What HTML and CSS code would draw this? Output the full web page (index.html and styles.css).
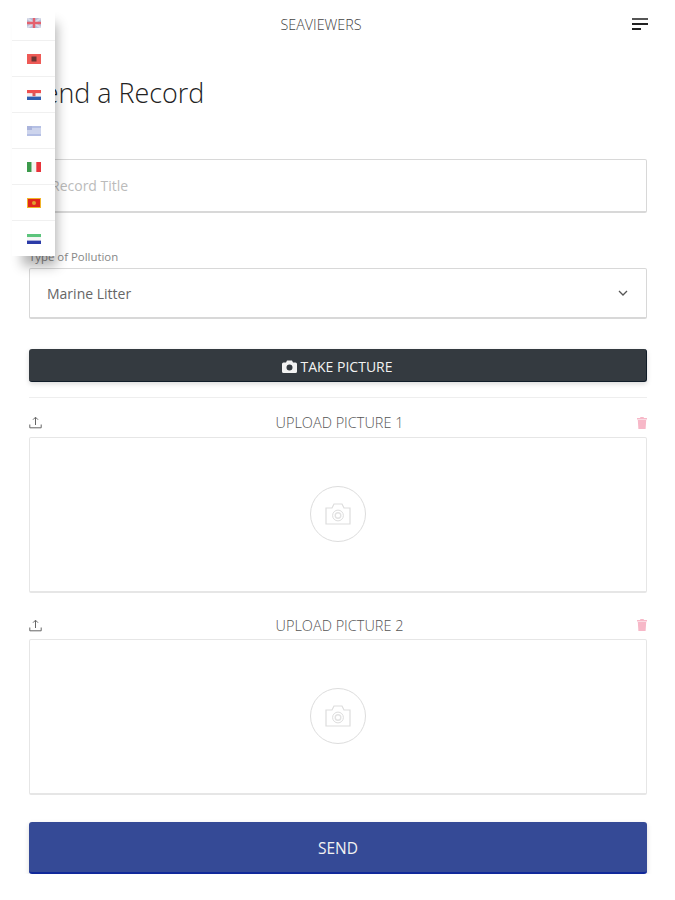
FILE: index.html
```html
<!DOCTYPE html>
<html lang="en">
<head>
  <meta charset="UTF-8" />
  <title>Seaviewers</title>
  <link rel="stylesheet" href="styles.css">
</head>
<body>
  <header class="topbar">
    <span class="brand">SEAVIEWERS</span>
    <svg class="burger" width="16" height="14" viewBox="0 0 16 14">
      <rect x="0" y="0" width="16" height="2" fill="#555"/>
      <rect x="0" y="5" width="16" height="2" fill="#222"/>
      <rect x="0" y="10" width="9" height="2" fill="#222"/>
    </svg>
  </header>

  <!-- language menu, lies over the form -->
  <ul class="langs">
    <li>
      <svg class="flag" viewBox="0 0 14 10">
        <rect width="14" height="10" fill="#b9bfd8"/>
        <path d="M0 0L14 10M14 0L0 10" stroke="#d9dbe8" stroke-width="2"/>
        <path d="M7 0V10M0 5H14" stroke="#e4606d" stroke-width="2.4"/>
      </svg>
    </li>
    <li>
      <svg class="flag" viewBox="0 0 14 10">
        <rect width="14" height="10" fill="#ee5a56"/>
        <rect x="4.5" y="2.5" width="5" height="5" fill="#6b3533"/>
      </svg>
    </li>
    <li>
      <svg class="flag" viewBox="0 0 14 10">
        <rect width="14" height="3.4" fill="#ee4f4f"/>
        <rect y="3.4" width="14" height="3.2" fill="#f4eeee"/>
        <rect y="6.6" width="14" height="3.4" fill="#2f5fb0"/>
        <rect x="5.5" y="2.6" width="3" height="3.6" fill="#d65a5a"/>
      </svg>
    </li>
    <li>
      <svg class="flag" viewBox="0 0 14 10">
        <rect width="14" height="10" fill="#b4bfe4"/>
        <path d="M0 3H14M0 5H14M0 7H14" stroke="#e6e9f5" stroke-width="1"/>
        <rect width="5" height="4" fill="#aab4dc"/>
      </svg>
    </li>
    <li>
      <svg class="flag" viewBox="0 0 14 10">
        <rect width="4.7" height="10" fill="#3c9a4c"/>
        <rect x="4.7" width="4.6" height="10" fill="#f4f4f0"/>
        <rect x="9.3" width="4.7" height="10" fill="#e8333a"/>
      </svg>
    </li>
    <li>
      <svg class="flag" viewBox="0 0 14 10">
        <rect width="14" height="10" fill="#f0b429"/>
        <rect x="1" y="1" width="12" height="8" fill="#e1261c"/>
        <circle cx="7" cy="5" r="2" fill="#e0a030"/>
      </svg>
    </li>
    <li>
      <svg class="flag" viewBox="0 0 14 10">
        <rect width="14" height="3.2" fill="#5cc47c"/>
        <rect y="3.2" width="14" height="3.4" fill="#f6f6f6"/>
        <rect y="6.6" width="14" height="3.4" fill="#2b3ba8"/>
      </svg>
    </li>
  </ul>

  <main class="page">
    <h1>Send a Record</h1>

    <input class="field field-title" type="text" placeholder="Record Title">

    <label class="field-label" for="pollution">Type of Pollution</label>
    <div class="select">
      <span id="pollution">Marine Litter</span>
      <svg width="10" height="6" viewBox="0 0 10 6">
        <path d="M1 1l4 4 4-4" fill="none" stroke="#555" stroke-width="1.3"/>
      </svg>
    </div>

    <button class="btn btn-dark">
      <svg width="15" height="13" viewBox="0 0 15 13">
        <path fill-rule="evenodd" fill="#f2f2f2" d="M1.5 2.5H4L5 .5H10L11 2.5H13.5A1.5 1.5 0 0 1 15 4V11.5A1.5 1.5 0 0 1 13.5 13H1.5A1.5 1.5 0 0 1 0 11.5V4A1.5 1.5 0 0 1 1.5 2.5ZM7.5 4.5A3 3 0 1 0 7.5 10.5A3 3 0 1 0 7.5 4.5Z"/>
      </svg>
      TAKE PICTURE
    </button>

    <hr class="divider">

    <section class="upload">
      <div class="upload-head">
        <svg width="13" height="13" viewBox="0 0 13 13">
          <path d="M6.5 9V1.5M4 3.7L6.5 1.2 9 3.7M.8 8.5V11.8H12.2V8.5" fill="none" stroke="#666" stroke-width="1"/>
        </svg>
        <span>UPLOAD PICTURE 1</span>
        <svg width="10" height="12" viewBox="0 0 10 12">
          <path d="M3.5 0H6.5L7 1H10V2.4H0V1H3ZM.8 3H9.2L8.6 12H1.4Z" fill="#f7b8c8"/>
        </svg>
      </div>
      <div class="drop">
        <div class="drop-circle">
          <svg width="26" height="22" viewBox="0 0 26 22">
            <path d="M1 5H7L9 1H17L19 5H25V21H1Z" fill="none" stroke="#ddd" stroke-width="1.2"/>
            <circle cx="13" cy="12.5" r="5.4" fill="none" stroke="#ddd" stroke-width="1"/>
            <circle cx="13" cy="12.5" r="2.8" fill="none" stroke="#e2e2e2" stroke-width="1.4"/>
          </svg>
        </div>
      </div>
    </section>

    <section class="upload">
      <div class="upload-head">
        <svg width="13" height="13" viewBox="0 0 13 13">
          <path d="M6.5 9V1.5M4 3.7L6.5 1.2 9 3.7M.8 8.5V11.8H12.2V8.5" fill="none" stroke="#666" stroke-width="1"/>
        </svg>
        <span>UPLOAD PICTURE 2</span>
        <svg width="10" height="12" viewBox="0 0 10 12">
          <path d="M3.5 0H6.5L7 1H10V2.4H0V1H3ZM.8 3H9.2L8.6 12H1.4Z" fill="#f7b8c8"/>
        </svg>
      </div>
      <div class="drop">
        <div class="drop-circle">
          <svg width="26" height="22" viewBox="0 0 26 22">
            <path d="M1 5H7L9 1H17L19 5H25V21H1Z" fill="none" stroke="#ddd" stroke-width="1.2"/>
            <circle cx="13" cy="12.5" r="5.4" fill="none" stroke="#ddd" stroke-width="1"/>
            <circle cx="13" cy="12.5" r="2.8" fill="none" stroke="#e2e2e2" stroke-width="1.4"/>
          </svg>
        </div>
      </div>
    </section>

    <button class="btn btn-send">SEND</button>
  </main>
</body>
</html>
```

FILE: styles.css
```css
* {
  box-sizing: border-box;
}

body {
  margin: 0;
  background: #fff;
  color: #444;
  font-family: "Open Sans", sans-serif;
}

.topbar {
  display: flex;
  justify-content: center;
  align-items: center;
  position: relative;
  height: 48px;
  padding: 0 27px 0 29px;
}

.brand {
  margin-left: -35px;
  font-size: 14.3px;
  font-weight: 300;
  color: #444;
}

.burger {
  position: absolute;
  right: 27px;
  top: 18px;
}

.langs {
  position: absolute;
  left: 12px;
  top: 5px;
  width: 43px;
  margin: 0;
  padding: 0;
  list-style: none;
  background: #fff;
  box-shadow: 6px 14px 12px -4px rgba(0, 0, 0, 0.3);
}

.langs li {
  display: flex;
  align-items: center;
  justify-content: center;
  height: 36px;
  border-bottom: 1px solid #f0f0f0;
}

.langs li:last-child {
  height: 35px;
  border-bottom: 0;
}

.flag {
  width: 14px;
  height: 10px;
  margin-left: 1px;
}

.page {
  padding: 0 28px 0 29px;
}

h1 {
  margin: 26px 0 47px;
  height: 38px;
  font-size: 26.9px;
  font-weight: 300;
  line-height: 38px;
  color: #222;
}

.field {
  display: block;
  width: 100%;
  height: 54px;
  padding: 0 17px 0 21px;
  border: 1px solid #d8d8d8;
  border-bottom-width: 2px;
  border-radius: 2px;
  background: #fff;
  font-family: inherit;
  font-size: 14px;
}

.field::placeholder {
  color: #bbb;
}

.field-label {
  display: block;
  margin-top: 36px;
  height: 19px;
  font-size: 11.4px;
  line-height: 15px;
  color: #888;
}

.select {
  display: flex;
  align-items: center;
  justify-content: space-between;
  height: 51px;
  padding: 0 18px 0 17px;
  border: 1px solid #d8d8d8;
  border-bottom-width: 2px;
  border-radius: 2px;
  font-size: 14px;
  color: #666;
}

.btn {
  display: flex;
  align-items: center;
  justify-content: center;
  gap: 3px;
  width: 100%;
  border: 0;
  border-radius: 3px;
  color: #f2f2f2;
  font-family: inherit;
}

.btn-dark {
  margin-top: 30px;
  height: 33px;
  padding: 2px 0 0;
  background: #343a40;
  border-bottom: 1px solid #101c28;
  border-right: 1px solid #101c28;
  box-shadow: 0 2px 5px rgba(0, 0, 0, 0.15);
  font-size: 14px;
}

.divider {
  margin: 15px 0 0;
  border: 0;
  border-top: 1px solid #eee;
}

.upload-head {
  display: flex;
  align-items: center;
  justify-content: space-between;
  height: 39px;
  padding-top: 10px;
  font-size: 14.5px;
  font-weight: 300;
  color: #555;
}

.upload + .upload .upload-head {
  margin-top: 8px;
  height: 38px;
}

.drop {
  display: flex;
  align-items: center;
  justify-content: center;
  height: 156px;
  padding-bottom: 2px;
  border: 1px solid #e6e6e6;
  border-bottom-width: 2px;
  border-radius: 2px;
}

.drop-circle {
  display: flex;
  align-items: center;
  justify-content: center;
  width: 56px;
  height: 56px;
  border: 1px solid #ddd;
  border-radius: 50%;
}

.btn-send {
  margin-top: 27px;
  height: 52px;
  padding: 2px 0 0;
  background: #354a96;
  border-bottom: 2px solid #11299a;
  box-shadow: 0 2px 5px rgba(0, 0, 0, 0.15);
  font-size: 15.5px;
}
```
